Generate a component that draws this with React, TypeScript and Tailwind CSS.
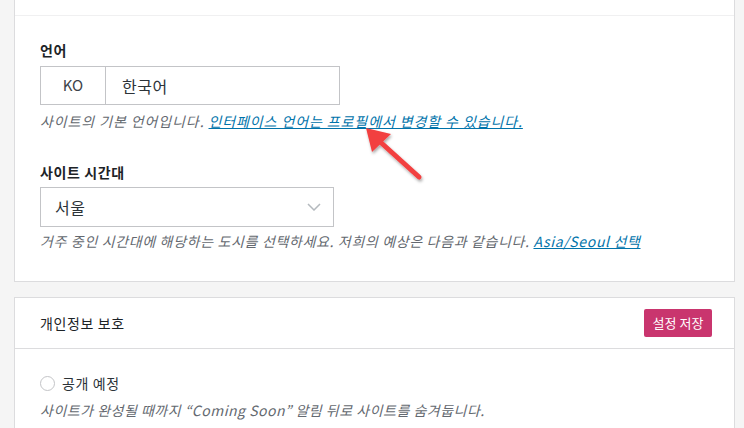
import React from "react";

export default function App() {
  const font = { fontFamily: '"Noto Sans CJK KR", "Noto Sans", sans-serif' };
  return (
    <div
      className="relative w-[744px] h-[428px] overflow-hidden bg-[#f5f5f5] pl-[14px] text-[#1d2327]"
      style={font}
    >
      {/* Card 1 */}
      <div className="w-[721px] bg-white border-x border-b border-[#dcdcde]">
        <div className="h-[16px] border-b border-[#f0f0f1]" />
        <div className="pl-[25px] pt-[24px] pb-[30px]">
          <div className="h-[20px] leading-[20px] text-[14px] font-semibold tracking-[0.5px]">언어</div>
          <div className="mt-[6px] flex h-[39px] w-[300px] border border-[#c3c4c7]">
            <div className="flex w-[65px] items-center justify-center border-r border-[#c3c4c7] text-[15px] text-[#3c434a]">
              KO
            </div>
            <div className="flex items-center pl-[16px] text-[16px] tracking-[0.5px] text-[#2c3338]">한국어</div>
          </div>
          <div className="mt-[6px] h-[20px] whitespace-nowrap leading-[20px] text-[14px] italic tracking-[0.9px] text-[#646970]">
            사이트의 기본 언어입니다.{" "}
            <span className="text-[#0073aa] underline">인터페이스 언어는 프로필에서 변경할 수 있습니다.</span>
          </div>
          <div className="mt-[31px] h-[20px] leading-[20px] text-[14px] font-semibold tracking-[0.6px]">사이트 시간대</div>
          <div className="mt-[5px] flex h-[40px] w-[294px] items-center justify-between border border-[#c3c4c7] pl-[14px] pr-[12px]">
            <span className="text-[16px] tracking-[0.5px] text-[#2c3338]">서울</span>
            <svg width="14" height="8" viewBox="0 0 14 8" fill="none">
              <path d="M1 1L7 7L13 1" stroke="#b4b9be" strokeWidth="1.5" />
            </svg>
          </div>
          <div className="mt-[4px] h-[20px] whitespace-nowrap leading-[20px] text-[14px] italic tracking-[0.65px] text-[#646970]">
            거주 중인 시간대에 해당하는 도시를 선택하세요. 저희의 예상은 다음과 같습니다.{" "}
            <span className="text-[#0073aa] underline">Asia/Seoul 선택</span>
          </div>
        </div>
      </div>

      {/* Card 2 */}
      <div className="mt-[15px] w-[721px] bg-white border border-[#dcdcde]">
        <div className="flex h-[51px] items-center justify-between border-b border-[#dcdcde] pl-[25px] pr-[22px]">
          <span className="text-[14px] tracking-[0.6px] text-[#1d2327]">개인정보 보호</span>
          <button className="h-[28px] w-[68px] rounded-[2px] bg-[#c9356e] text-[13px] text-white">
            설정 저장
          </button>
        </div>
        <div className="pl-[25px] pt-[24px] pb-[20px]">
          <div className="flex h-[20px] items-center">
            <span className="h-[15px] w-[15px] rounded-full border border-[#c3c4c7] bg-white" />
            <span className="ml-[7px] text-[14px] tracking-[0.6px] text-[#2c3338]">공개 예정</span>
          </div>
          <div className="mt-[7px] h-[20px] whitespace-nowrap leading-[20px] text-[14px] italic tracking-[0.5px] text-[#646970]">
            사이트가 완성될 때까지 “Coming Soon” 알림 뒤로 사이트를 숨겨둡니다.
          </div>
        </div>
      </div>

      {/* Annotation arrow */}
      <svg
        className="absolute left-[355px] top-[118px]"
        width="80"
        height="72"
        viewBox="0 0 80 72"
      >
        <defs>
          <filter id="sh" x="-20%" y="-20%" width="150%" height="150%">
            <feDropShadow dx="1" dy="2" stdDeviation="1.5" floodColor="#000" floodOpacity="0.35" />
          </filter>
        </defs>
        <g filter="url(#sh)">
          <line x1="64" y1="59" x2="22" y2="21" stroke="#f24141" strokeWidth="5" strokeLinecap="round" />
          <polygon points="11,10 36,16 17,34" fill="#f24141" />
        </g>
      </svg>
    </div>
  );
}
